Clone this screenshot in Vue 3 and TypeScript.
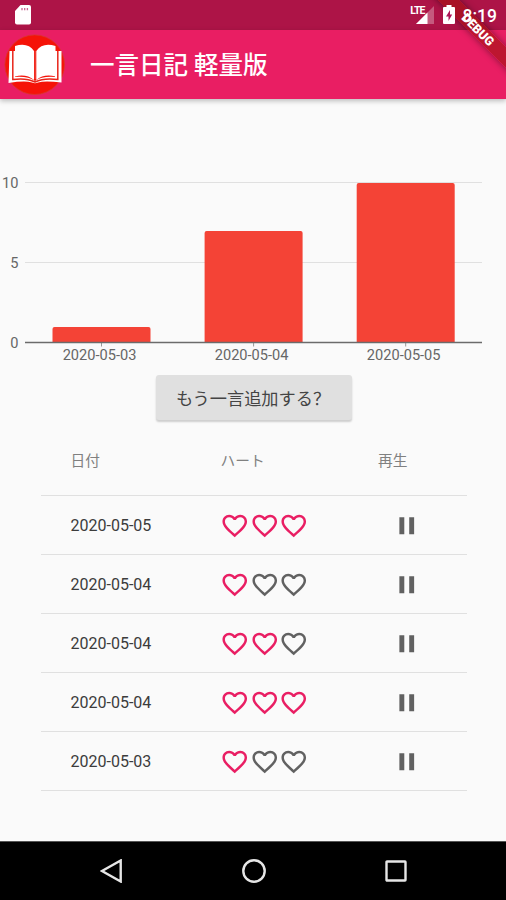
<script setup lang="ts">
interface Entry {
  date: string
  hearts: number
}

const entries: Entry[] = [
  { date: '2020-05-05', hearts: 3 },
  { date: '2020-05-04', hearts: 1 },
  { date: '2020-05-04', hearts: 2 },
  { date: '2020-05-04', hearts: 3 },
  { date: '2020-05-03', hearts: 1 },
]

const totals = [
  { date: '2020-05-03', value: 1 },
  { date: '2020-05-04', value: 7 },
  { date: '2020-05-05', value: 10 },
]

const ticks = [10, 5, 0]
const unit = 16
const base = 172.5
const step = 152.1

const yOf = (v: number): number => base - v * unit
const xOf = (i: number): number => 101.5 + i * step

const barPath = (i: number, v: number): string => {
  const left = xOf(i) - 49
  const right = xOf(i) + 49
  const top = yOf(v) + 0.5
  return `M${left} ${base}V${top + 2}q0-2 2-2H${right - 2}q2 0 2 2V${base}z`
}
</script>

<template>
  <div class="screen">
    <header class="status">
      <svg class="sd" viewBox="0 0 16 20"><path d="M5.500 0H14a2 2 0 0 1 2 2v15.500a2 2 0 0 1-2 2H2a2 2 0 0 1-2-2V6z" fill="#fff" /><path d="M7 3v2.200M9.700 3v2.200M12.400 3v2.200" stroke="#ad1457" stroke-width="1.300" opacity=".65" /></svg>
      <div class="indicators">
        <span class="lte">LTE</span>
        <svg class="signal" viewBox="0 0 18 18"><path d="M18 0v18H0z" fill="#fff" opacity=".3" /><path d="M11.500 6.500V18H0z" fill="#fff" /></svg>
        <svg class="battery" viewBox="0 0 12 19"><path d="M3.500 0h5v2H11q1 0 1 1v15q0 1-1 1H1q-1 0-1-1V3q0-1 1-1h2.500z" fill="#fff" /><path d="M7 5L3 11.500h2.500V16L9.200 9.500H7z" fill="#ad1457" /></svg>
        <span class="clock">8:19</span>
      </div>
    </header>

    <div class="appbar">
      <svg class="logo" viewBox="0 0 62 62">
        <circle cx="30.700" cy="30.700" r="29.800" fill="#f51308" stroke="#d7382f" stroke-width=".8" />
        <path d="M5.500 17H11v26q13-1 20 4q7-5 20-4V17h6.500v31.500q-17-2-23.500 0q-3 1.500-6 0Q21 46.500 4.500 49z" fill="#fff" />
        <path d="M8.800 17v28.500Q22 43.500 31 48Q40 43.500 53.800 45.500V17" fill="none" stroke="#e8261b" stroke-width="1.500" />
        <path d="M11 12Q24 8 30 17V46Q22 39.500 11 42.500z" fill="#fff" />
        <path d="M51.500 12Q38.500 8 32.300 17V46Q40 39.500 51.500 42.500z" fill="#fff" />
        <path d="M31.200 17V45" stroke="#f03a30" stroke-width="1.600" />
      </svg>
      <h1>一言日記 軽量版</h1>
    </div>

    <main>
      <svg class="chart" viewBox="0 0 506 200">
        <g v-for="t in ticks" :key="t">
          <line x1="25" x2="482" :y1="yOf(t)" :y2="yOf(t)" class="grid" />
          <text x="18.500" :y="yOf(t) + 5.200" text-anchor="end">{{ t }}</text>
        </g>
        <g v-for="(d, i) in totals" :key="d.date">
          <path :d="barPath(i, d.value)" class="bar" />
          <line :x1="xOf(i)" :x2="xOf(i)" :y1="base" :y2="base + 4" class="tick" />
          <text :x="xOf(i) - 2" :y="base + 17.500" text-anchor="middle">{{ d.date }}</text>
        </g>
        <line x1="25" x2="482" :y1="base" :y2="base" class="axis" />
      </svg>

      <button class="add" type="button">もう一言追加する？</button>

      <section class="table">
        <div class="row head">
          <span>日付</span><span>ハート</span><span class="play-label">再生</span>
        </div>
        <div v-for="(e, i) in entries" :key="i" class="row">
          <span class="date">{{ e.date }}</span>
          <span class="hearts">
            <svg v-for="n in 3" :key="n" viewBox="0 0 24 24" :class="{ on: n <= e.hearts }">
              <path d="M16.500 3c-1.740 0-3.410.81-4.500 2.090C10.910 3.810 9.240 3 7.500 3 4.420 3 2 5.420 2 8.500c0 3.780 3.400 6.860 8.550 11.540L12 21.350l1.450-1.320C18.600 15.360 22 12.280 22 8.500 22 5.420 19.580 3 16.500 3zm-4.400 15.550l-.1.1-.1-.1C7.140 14.240 4 11.390 4 8.500 4 6.500 5.500 5 7.500 5c1.540 0 3.040.99 3.570 2.360h1.870C13.460 5.990 14.960 5 16.500 5c2 0 3.500 1.500 3.500 3.500 0 2.890-3.140 5.740-7.900 10.050z" />
            </svg>
          </span>
          <svg class="pause" viewBox="0 0 24 24"><path d="M6 19h4V5H6v14zm8-14v14h4V5h-4z" /></svg>
        </div>
      </section>
    </main>

    <nav>
      <svg viewBox="0 0 24 24"><path d="M20.700 1.500v21L2 12z" /></svg>
      <svg viewBox="0 0 24 24"><circle cx="12" cy="12" r="10.700" /></svg>
      <svg viewBox="0 0 24 24"><rect x="2.500" y="2.500" width="19" height="19" rx=".5" /></svg>
    </nav>

    <div class="ribbon">DEBUG</div>
  </div>
</template>

<style>
body {
  margin: 0;
}
</style>

<style scoped>
.screen {
  position: relative;
  display: flex;
  flex-direction: column;
  width: 506px;
  height: 900px;
  overflow: hidden;
  background: #fafafa;
  font-family: Roboto, "Noto Sans CJK JP", sans-serif;
}
.status {
  display: flex;
  justify-content: space-between;
  height: 30px;
  box-sizing: border-box;
  padding: 5px 9px 0 15px;
  background: #ad1447;
}
.sd {
  width: 16px;
  height: 20px;
}
.indicators {
  position: relative;
  z-index: 2;
  display: flex;
  align-items: flex-start;
  color: #fff;
}
.lte {
  font-size: 10.500px;
  font-weight: 700;
  line-height: 11px;
  letter-spacing: -0.900px;
  margin-right: -9px;
}
.signal {
  width: 18px;
  height: 18px;
  margin-top: 1px;
}
.battery {
  width: 12px;
  height: 19px;
  margin: 0 8px 0 9px;
}
.clock {
  font-size: 17.500px;
  font-weight: 500;
  line-height: 22px;
}
.appbar {
  display: flex;
  align-items: center;
  height: 69px;
  box-sizing: border-box;
  padding-left: 4px;
  background: #e91e63;
  box-shadow: 0 2px 5px rgba(0, 0, 0, 0.25);
}
.logo {
  width: 62px;
  height: 62px;
}
h1 {
  margin: 3px 0 0 24px;
  color: #fff;
  font-size: 24.500px;
  font-weight: 500;
  line-height: 36px;
}
main {
  display: flex;
  flex: 1;
  flex-direction: column;
  align-items: center;
  padding-top: 71px;
}
.chart {
  width: 506px;
  height: 200px;
}
.chart text {
  font-size: 14.600px;
  fill: #666;
}
.grid {
  stroke: #e0e0e0;
  stroke-width: 1.200;
}
.axis {
  stroke: #6b6b6b;
  stroke-width: 1.500;
}
.tick {
  stroke: #999;
  stroke-width: 1;
}
.bar {
  fill: #f44336;
}
.add {
  width: 196px;
  height: 45px;
  margin: 5px 0 0 2px;
  padding: 0 2px 0 0;
  border: 0;
  border-radius: 3px;
  background: #e0e0e0;
  box-shadow: 0 2px 2px rgba(0, 0, 0, 0.18);
  color: #444;
  font-family: "Noto Sans CJK SC", sans-serif;
  font-size: 17.200px;
  white-space: nowrap;
}
.table {
  width: 426px;
  margin: 6px 0 0 2px;
}
.row {
  display: grid;
  grid-template-columns: 150px 154px 1fr;
  align-items: center;
  height: 59.050px;
  box-sizing: border-box;
  padding: 2px 0 0 29.500px;
  border-bottom: 1px solid #e0e0e0;
}
.head {
  height: 69.500px;
  padding-top: 0;
  color: #808080;
  font-size: 14.700px;
}
.head span {
  margin-top: -2px;
}
.play-label {
  padding-left: 3.500px;
}
.date {
  color: #3c3c3c;
  font-size: 16px;
}
.hearts {
  display: flex;
  margin-left: -0.500px;
}
.hearts svg {
  width: 29.500px;
  height: 29.500px;
  fill: #616161;
}
.hearts svg.on {
  fill: #e91e63;
}
.pause {
  width: 29.500px;
  height: 29.500px;
  margin: 1px 0 0 17.500px;
  fill: #616161;
}
nav {
  display: flex;
  align-items: center;
  justify-content: center;
  gap: 118px;
  height: 59px;
  box-sizing: border-box;
  padding-left: 2px;
  border-top: 1px solid #555;
  background: #000;
}
nav svg {
  width: 24px;
  height: 24px;
  fill: none;
  stroke: #e6e6e6;
  stroke-width: 2.400;
}
.ribbon {
  position: absolute;
  z-index: 1;
  top: 22px;
  left: 418px;
  width: 120px;
  height: 15px;
  transform: rotate(45deg);
  background: rgba(165, 18, 22, 0.66);
  box-shadow: 0 0 7px rgba(0, 0, 0, 0.45);
  color: #fff;
  font-size: 12.500px;
  font-weight: 900;
  line-height: 15px;
  text-align: center;
}
</style>
